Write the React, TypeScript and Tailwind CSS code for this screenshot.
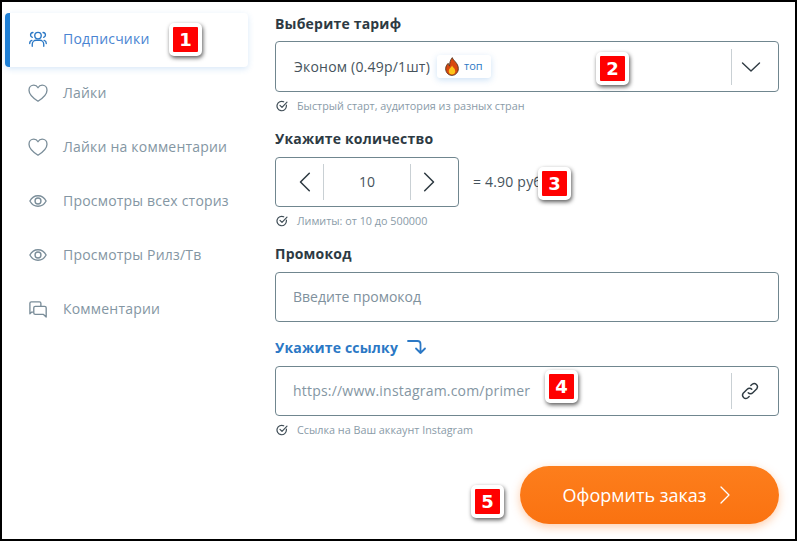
// App.tsx
import React from "react";

const font = { fontFamily: '"Open Sans", sans-serif' };

function Users() {
  return (
    <svg width="18" height="18" viewBox="0 0 20 20" fill="none" stroke="currentColor" strokeWidth="1.5" strokeLinecap="round">
      <circle cx="10" cy="6.2" r="3.6" />
      <path d="M3.6 18v-2c0-2.800 2.200-4.600 4.200-4.600h4.400c2 0 4.200 1.800 4.200 4.600v2" />
      <path d="M4.400 2.800C2.600 3 1.700 4.400 1.700 5.600s.8 2.200 2 2.600M15.600 2.800c1.800.2 2.700 1.600 2.700 2.800s-.8 2.200-2 2.600" />
      <path d="M.8 15c0-1.800 1-3 2.400-3.400M19.200 15c0-1.800-1-3-2.400-3.400" />
    </svg>
  );
}

function Heart() {
  return (
    <svg width="20" height="20" viewBox="0 0 20 20" fill="none" stroke="currentColor" strokeWidth="1.300" strokeLinejoin="round">
      <path d="M10 18.200C5.600 15.400 1 11.800 1 7.200 1 4.200 3.200 2.200 5.800 2.200c1.800 0 3.300.9 4.200 2.500.9-1.600 2.400-2.500 4.200-2.500 2.600 0 4.800 2 4.800 5 0 4.600-4.600 8.200-9 11z" />
    </svg>
  );
}

function Eye() {
  return (
    <svg width="18" height="18" viewBox="0 0 20 20" fill="none" stroke="currentColor" strokeWidth="1.500">
      <path d="M1 10C3 6.200 6.300 4.200 10 4.200s7 2 9 5.800c-2 3.800-5.300 5.800-9 5.800S3 13.800 1 10z" />
      <circle cx="10" cy="10" r="3.300" />
    </svg>
  );
}

function Chat() {
  return (
    <svg width="18" height="18" viewBox="0 0 20 20" fill="none" stroke="currentColor" strokeWidth="1.500" strokeLinejoin="round">
      <path d="M5 13.400H3L1 15.400V3.600C1 2.600 1.700 2 2.600 2h9c.9 0 1.600.6 1.600 1.600V7" />
      <path d="M7 7h10.400c1 0 1.700.7 1.700 1.600V19l-3-3H7c-1 0-1.700-.7-1.700-1.600V8.600C5.300 7.700 6 7 7 7z" />
    </svg>
  );
}

function Check() {
  return (
    <svg width="12" height="12" viewBox="0 0 12 12" fill="none" stroke="#3f4d56" strokeWidth="1.200" strokeLinecap="round" strokeLinejoin="round" className="shrink-0">
      <path d="M10.400 5.200v.9A4.700 4.700 0 1 1 7.700 1.800" />
      <path d="M4 5.400l2 2 5-5.200" />
    </svg>
  );
}

function Chevron({ d, size = 20 }: { d: string; size?: number }) {
  return (
    <svg width={size} height={size} viewBox="0 0 20 20" fill="none" stroke="#2f3b43" strokeWidth="1.400" strokeLinecap="round" strokeLinejoin="round">
      <path d={d} />
    </svg>
  );
}

function Flame() {
  return (
    <svg width="14" height="19" viewBox="0 0 13 18">
      <path d="M6.800.6c.6 2.600 5.700 5.200 5.700 10.400 0 3.600-2.600 6.400-6 6.400S.5 14.700.5 11.200c0-2.400 1.200-4 2.400-5.200.1 1.300.6 2.200 1.300 2.500C4.100 5.500 5 2.600 6.800.6z" fill="#d9480f" stroke="#4a2a12" strokeWidth="0.8" />
      <path d="M6.600 8c.3 1.500 3 2.800 3 5.400 0 1.800-1.400 3.200-3.100 3.200s-3.100-1.400-3.100-3.200C3.400 11 5.600 10 6.600 8z" fill="#fcc419" />
    </svg>
  );
}

function Badge({ n, className }: { n: number; className: string }) {
  return (
    <div
      className={`absolute flex h-[33px] w-[33px] items-center justify-center rounded-[5px] border-[4px] border-white bg-[#ff0000] text-[18px] font-bold text-white shadow-[1px_2px_4px_rgba(0,0,0,0.65)] ${className}`}
      style={{ fontFamily: '"DejaVu Sans", sans-serif' }}
    >
      {n}
    </div>
  );
}

function Hint({ children }: { children: React.ReactNode }) {
  return (
    <div className="mt-[7px] flex h-[14px] items-center gap-[9px] pl-[1px] text-[10.8px] text-[#8a9ba8]">
      <Check />
      <span>{children}</span>
    </div>
  );
}

function Label({ children, blue }: { children: React.ReactNode; blue?: boolean }) {
  return (
    <div className={`flex h-[20px] items-center pb-[2px] text-[14px] font-bold tracking-[0.2px] ${blue ? "text-[#2b78c5]" : "text-[#2d3a43]"}`}>
      {children}
    </div>
  );
}

const menu = [
  { label: "Подписчики", icon: <Users />, active: true },
  { label: "Лайки", icon: <Heart /> },
  { label: "Лайки на комментарии", icon: <Heart /> },
  { label: "Просмотры всех сториз", icon: <Eye /> },
  { label: "Просмотры Рилз/Тв", icon: <Eye /> },
  { label: "Комментарии", icon: <Chat /> },
];

export default function App() {
  return (
    <div
      className="relative box-border flex h-[541px] w-[797px] overflow-hidden border-2 border-black bg-white"
      style={font}
    >
      <aside className="mt-[11px] ml-[3px] w-[243px] shrink-0">
        {menu.map((item) => (
          <div
            key={item.label}
            className={`flex h-[54px] items-center border-l-[5px] pb-[3px] pl-[18px] text-[14px] tracking-[0.2px] ${
              item.active
                ? "rounded-[4px] border-[#1d7fd6] text-[#4a84d2] shadow-[0_2px_6px_rgba(60,140,220,0.2)]"
                : "border-transparent text-[#8496a3]"
            }`}
          >
            <span className={`flex w-[20px] justify-center ${item.active ? "text-[#2b78c5]" : "text-[#7a8d99]"}`}>{item.icon}</span>
            <span className="ml-[15px]">{item.label}</span>
          </div>
        ))}
      </aside>

      <main className="ml-[27px] w-[504px] pt-[12px]">
        <Label>Выберите тариф</Label>
        <div className="mt-[7px] flex h-[51px] items-center rounded-[4px] border border-[#70868f] pl-[18px] text-[14px] tracking-[0.2px] text-[#46535c]">
          <span>Эконом (0.49р/1шт)</span>
          <span className="ml-[7px] flex h-[23px] w-[54px] items-center gap-[5px] rounded-[3px] bg-white pl-[8px] text-[11px] tracking-normal text-[#2b78c5] shadow-[0_2px_6px_rgba(60,140,220,0.25)]">
            <Flame />
            топ
          </span>
          <span className="ml-auto flex h-[36px] w-[47px] items-center border-l border-[#c9d0d4] pl-[9px]">
            <Chevron d="M1.500 6l8.500 8 8.500-8" size={20} />
          </span>
        </div>
        <Hint>Быстрый старт, аудитория из разных стран</Hint>

        <div className="mt-[16px]">
          <Label>Укажите количество</Label>
        </div>
        <div className="mt-[8px] flex items-center">
          <div className="flex h-[50px] w-[184px] items-center rounded-[4px] border border-[#70868f] pb-[1px] text-[14px] text-[#46535c]">
            <span className="flex h-[36px] w-[48px] items-center justify-end border-r border-[#c9d0d4] pr-[6px]">
              <Chevron d="M13 2l-8 8 8 8" size={22} />
            </span>
            <span className="flex-1 text-center">10</span>
            <span className="flex h-[36px] w-[48px] items-center border-l border-[#c9d0d4] pl-[6px]">
              <Chevron d="M7 2l8 8-8 8" size={22} />
            </span>
          </div>
          <span className="ml-[14px] pb-[1px] text-[14px] tracking-[0.2px] text-[#46535c]">= 4.90 руб</span>
        </div>
        <Hint>Лимиты: от 10 до 500000</Hint>

        <div className="mt-[16px]">
          <Label>Промокод</Label>
        </div>
        <div className="mt-[8px] flex h-[50px] items-center rounded-[4px] border border-[#70868f] pb-[1px] pl-[17px] text-[14px] text-[#7f919d]">
          Введите промокод
        </div>

        <div className="mt-[16px]">
          <Label blue>
            Укажите ссылку
            <svg width="20" height="16" viewBox="0 0 20 16" fill="none" stroke="#2b78c5" strokeWidth="1.800" strokeLinecap="round" strokeLinejoin="round" className="ml-[9px]">
              <path d="M1 2h9.500c2 0 3 1 3 3v9M9 9.500l4.500 4.500 4.500-4.500" />
            </svg>
          </Label>
        </div>
        <div className="mt-[8px] flex h-[50px] items-center rounded-[4px] border border-[#70868f] pl-[17px] text-[14px] text-[#8496a3]">
          <span className="pb-[1px] tracking-[0.2px]">https://www.instagram.com/primer</span>
          <span className="ml-auto flex h-[36px] w-[47px] items-center border-l border-[#c9d0d4] pl-[8px]">
            <svg width="20" height="20" viewBox="0 0 20 20" fill="none" stroke="#2f3b43" strokeWidth="1.400" strokeLinecap="round">
              <path d="M8.200 11.800a3.200 3.200 0 0 0 4.600 0l4-4a3.300 3.300 0 0 0-4.600-4.600L10.800 4.600" />
              <path d="M11.800 8.200a3.200 3.200 0 0 0-4.600 0l-4 4a3.300 3.300 0 0 0 4.600 4.600l1.400-1.400" />
            </svg>
          </span>
        </div>
        <Hint>Ссылка на Ваш аккаунт Instagram</Hint>

        <div className="mt-[29px] flex justify-end">
          <button className="flex h-[58px] w-[259px] items-center justify-center gap-[13px] rounded-full bg-gradient-to-b from-[#fd7e1c] to-[#fa7210] pr-[5px] text-[18px] text-white shadow-[0_3px_10px_rgba(251,115,16,0.35)]">
            Оформить заказ
            <svg width="12" height="18" viewBox="0 0 12 18" fill="none" stroke="#ffffff" strokeWidth="1.300" strokeLinecap="round" strokeLinejoin="round">
              <path d="M2 1l8 8-8 8" />
            </svg>
          </button>
        </div>
      </main>

      <Badge n={1} className="left-[167px] top-[21px]" />
      <Badge n={2} className="left-[594px] top-[50px]" />
      <Badge n={3} className="left-[536px] top-[165px]" />
      <Badge n={4} className="left-[543px] top-[368px]" />
      <Badge n={5} className="left-[469px] top-[483px]" />
    </div>
  );
}
